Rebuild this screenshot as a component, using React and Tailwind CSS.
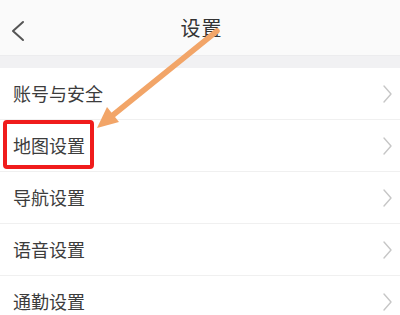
const items = ['账号与安全', '地图设置', '导航设置', '语音设置', '通勤设置'];

export default function App() {
  return (
    <div
      className="relative w-[400px] h-[315px] overflow-hidden bg-white"
      style={{ fontFamily: '"Noto Sans CJK SC", "Noto Sans", sans-serif' }}
    >
      <header className="relative h-[55px] bg-[#fafafa] flex items-center justify-center">
        <svg className="absolute left-[10px] top-[20px]" width="16" height="22" viewBox="0 0 16 22">
          <polyline points="13,2 3,11 13,20" fill="none" stroke="#555" strokeWidth="2" strokeLinecap="round" strokeLinejoin="round" />
        </svg>
        <h1 className="text-[20px] text-[#333] tracking-[1px] ml-[3px]">设置</h1>
      </header>
      <div className="h-[13px] bg-[#f1f1f3] border-t border-[#ececee]" />
      <ul>
        {items.map((t, i) => (
          <li
            key={t}
            className="relative h-[52px] flex items-center justify-between pl-[13px] pr-[8px] border-b border-[#f0f0f0]"
          >
            <span className="text-[18px] text-[#3c3c3c]">{t}</span>
            <svg width="10" height="18" viewBox="0 0 10 18">
              <polyline points="2,1 9,9 2,17" fill="none" stroke="#c6c6c6" strokeWidth="1.4" strokeLinecap="round" strokeLinejoin="round" />
            </svg>
            {i === 1 && (
              <div className="absolute left-[3px] top-[0px] w-[91px] h-[49px] border-[4px] border-[#f01c1c] rounded-[4px]" />
            )}
          </li>
        ))}
      </ul>
      <svg className="absolute inset-0 pointer-events-none" width="400" height="315">
        <line x1="217" y1="31" x2="110" y2="117.5" stroke="#f2a568" strokeWidth="5.5" strokeLinecap="round" />
        <polygon points="97,128 107,107 119,122" fill="#f2a568" />
      </svg>
    </div>
  );
}
